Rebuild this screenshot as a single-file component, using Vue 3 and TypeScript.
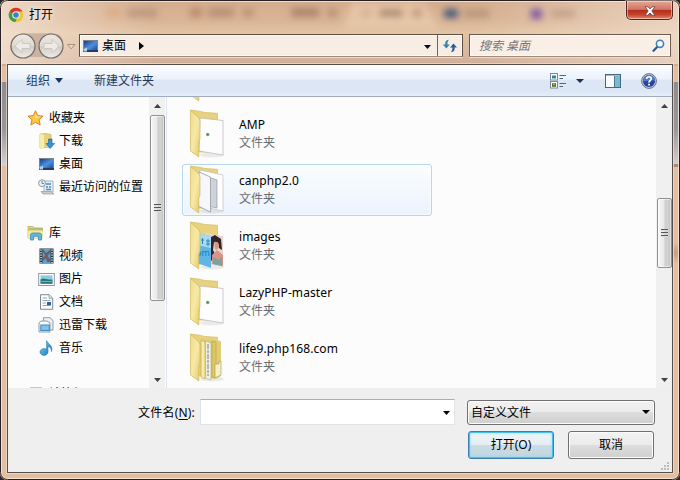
<script setup lang="ts">
type SideIcon = 'star' | 'down' | 'desktop' | 'recent' | 'library' | 'video' | 'picture' | 'doc' | 'thunder' | 'music' | 'computer'
interface SideItem { label: string; icon: SideIcon }
interface SideGroup { head: SideItem; children: SideItem[] }
type FolderKind = 'empty' | 'page' | 'sheets' | 'photos' | 'files'
interface FileItem { name: string; kind: FolderKind; active?: boolean }

const groups: SideGroup[] = [
  {
    head: { label: '收藏夹', icon: 'star' },
    children: [
      { label: '下载', icon: 'down' },
      { label: '桌面', icon: 'desktop' },
      { label: '最近访问的位置', icon: 'recent' },
    ],
  },
  {
    head: { label: '库', icon: 'library' },
    children: [
      { label: '视频', icon: 'video' },
      { label: '图片', icon: 'picture' },
      { label: '文档', icon: 'doc' },
      { label: '迅雷下载', icon: 'thunder' },
      { label: '音乐', icon: 'music' },
    ],
  },
  { head: { label: '计算机', icon: 'computer' }, children: [] },
]

const rows = groups.map((g) => [{ ...g.head, head: true }, ...g.children.map((c) => ({ ...c, head: false }))])

const files: FileItem[] = [
  { name: '', kind: 'empty' },
  { name: 'AMP', kind: 'page' },
  { name: 'canphp2.0', kind: 'sheets', active: true },
  { name: 'images', kind: 'photos' },
  { name: 'LazyPHP-master', kind: 'page' },
  { name: 'life9.php168.com', kind: 'files' },
]
</script>

<template>
  <div class="window">
    <svg class="glass" width="680" height="480" aria-hidden="true">
      <defs>
        <linearGradient id="glassTop" x1="0" y1="0" x2="0" y2="1">
          <stop offset="0" stop-color="#d3ac8d" /><stop offset=".3" stop-color="#d9b496" />
          <stop offset=".5" stop-color="#e2c3a3" /><stop offset=".8" stop-color="#d8b79f" /><stop offset="1" stop-color="#cfae98" />
        </linearGradient>
        <linearGradient id="sideGrey" x1="0" y1="0" x2="0" y2="1">
          <stop offset="0" stop-color="#8d8d92" /><stop offset=".55" stop-color="#96969b" /><stop offset="1" stop-color="#d4d1d2" />
        </linearGradient>
        <linearGradient id="glow" x1="0" x2="1"><stop offset="0" stop-color="#f6e6d8" stop-opacity=".75" /><stop offset="1" stop-color="#f6e6d8" stop-opacity="0" /></linearGradient>
        <linearGradient id="glowRight" x1="0" x2="1"><stop offset="0" stop-color="#f6e6d8" stop-opacity="0" /><stop offset="1" stop-color="#f6e6d8" stop-opacity=".6" /></linearGradient>
        <filter id="soft" x="-50%" y="-50%" width="200%" height="200%"><feGaussianBlur stdDeviation="3.6" /></filter>
      </defs>
      <rect width="680" height="480" fill="#e1bea2" />
      <rect width="680" height="66" fill="url(#glassTop)" />
      <rect width="150" height="64" fill="url(#glow)" />
      <rect x="480" width="200" height="64" fill="url(#glowRight)" />
      <g filter="url(#soft)">
        <path d="M344 28 352 3H424L438 28Z" fill="#edceb0" opacity=".7" />
        <rect x="106" y="9" width="14" height="8" fill="#df9e66" opacity=".5" /><rect x="127" y="9" width="30" height="8" fill="#97745e" opacity=".45" />
        <rect x="190" y="8" width="12" height="9" fill="#b07958" opacity=".7" /><rect x="208" y="8" width="26" height="9" fill="#967158" opacity=".5" />
        <rect x="243" y="9" width="10" height="8" fill="#967158" opacity=".5" /><rect x="291" y="8" width="28" height="9" fill="#91694f" opacity=".6" />
        <rect x="328" y="9" width="9" height="8" fill="#91694f" opacity=".5" /><rect x="361" y="9" width="10" height="8" fill="#b48e70" opacity=".4" />
        <rect x="379" y="9" width="24" height="8" fill="#8e6a52" opacity=".65" /><rect x="412" y="9" width="10" height="8" fill="#9a7052" opacity=".55" />
        <rect x="444" y="9" width="14" height="9" fill="#3c4f78" opacity=".9" /><rect x="464" y="10" width="25" height="7" fill="#91735f" opacity=".5" />
        <rect x="531" y="9" width="11" height="10" fill="#6c45a4" opacity=".85" /><rect x="551" y="10" width="24" height="7" fill="#91735f" opacity=".4" />
      </g>
      <rect x="1" y="82" width="6" height="84" fill="url(#sideGrey)" /><rect x="673" y="82" width="6" height="84" fill="url(#sideGrey)" />
      <rect x="673" y="164" width="6" height="3" fill="#a98b76" /><rect x="673" y="248" width="6" height="10" fill="#a98268" filter="url(#soft)" />
      <rect x="1.5" y="1.5" width="677" height="477" rx="6" fill="none" stroke="#f8ebdd" stroke-opacity=".8" />
      <rect x=".5" y=".5" width="679" height="479" rx="7" fill="none" stroke="#272022" />
    </svg>

    <div class="chrome">
      <header class="titlebar">
        <svg class="logo" width="16" height="16" viewBox="0 0 16 16">
          <circle cx="8" cy="8" r="7.3" fill="#e8c92f" />
          <path d="M8 8 1.6 4.4A7.3 7.3 0 0 1 14.4 4.5H8Z" fill="#d8372a" />
          <path d="M8 8 1.6 4.4A7.3 7.3 0 0 0 7.2 15.3L10 9Z" fill="#41a047" />
          <circle cx="8" cy="8" r="3.8" fill="#f5f0e6" /><circle cx="8" cy="8" r="2.8" fill="#3f7fd0" />
        </svg>
        <h1>打开</h1>
        <button class="close" aria-label="关闭">
          <svg width="12" height="10" viewBox="0 0 12 10"><path d="M1 .8H4L6 2.9 8 .8H11L7.8 4.9 11 9.2H8L6 7 4 9.2H1L4.2 4.9Z" fill="#fff" stroke="#623c3b" stroke-width=".8" /></svg>
        </button>
      </header>

      <div class="navbar">
        <svg class="travel" width="70" height="28" viewBox="0 0 70 28">
          <defs>
            <linearGradient id="orb" x1="0" y1="0" x2="0" y2="1"><stop offset="0" stop-color="#eee8e1" /><stop offset=".48" stop-color="#dedad4" /><stop offset=".5" stop-color="#cfcac5" /><stop offset="1" stop-color="#efebe6" /></linearGradient>
          </defs>
          <path d="M14 1.2H43C50 1 54 4 55 9V19C50 28 44 27 40 25H18C8 28 2 20 2 14Z" fill="#bba28f" opacity=".65" />
          <circle cx="15" cy="14" r="12" fill="url(#orb)" stroke="#756c67" stroke-width="1.2" />
          <circle cx="43" cy="14" r="12" fill="url(#orb)" stroke="#756c67" stroke-width="1.2" />
          <path d="M7 14 14 7.5V11.5H22V16.5H14V20.5Z M51 14 44 7.5V11.5H36V16.5H44V20.5Z" fill="#eeebe7" stroke="#c6c0ba" stroke-width=".8" />
          <path d="M59.5 12.5H67L63.2 16.8Z" fill="#e8d8ca" stroke="#957f70" stroke-width=".8" />
        </svg>
        <div class="address">
          <svg width="17" height="14" viewBox="0 0 17 14"><use href="#i-desktop" /></svg>
          <span class="place">桌面</span>
          <svg class="crumb" width="5" height="8" viewBox="0 0 5 8"><path d="M0 0 5 4 0 8Z" fill="#000" /></svg>
          <svg class="addr-arrow" width="7" height="4" viewBox="0 0 7 4"><path d="M0 0H7L3.5 4Z" fill="#050542" /></svg>
          <span class="refresh">
            <svg width="16" height="14" viewBox="0 0 16 14">
              <path d="M7 .7C3.7 1 3 3 3.2 5.5H.8L4.4 9.4 7.8 5.5H5.5C5.3 3.5 5.6 2.3 7 .7Z" fill="#3287b5" />
              <path d="M8.8 13.3C12.1 13 12.8 11 12.6 8.5H15L11.5 4.6 8 8.5H10.3C10.5 10.5 10.2 11.7 8.8 13.3Z" fill="#275d9b" />
            </svg>
          </span>
        </div>
        <div class="search">
          <span>搜索 桌面</span>
          <svg width="13" height="13" viewBox="0 0 13 13"><path d="M1.5 11.7 5.6 7.5" stroke="#28588f" stroke-width="2.2" stroke-linecap="round" /><circle cx="8" cy="4.8" r="3.6" fill="#f4fafd" stroke="#3c83bc" stroke-width="1.6" /></svg>
        </div>
      </div>

      <main class="client">
        <div class="toolbar">
          <span>组织</span>
          <svg class="org-arrow" width="8" height="5" viewBox="0 0 8 5"><path d="M0 0H8L4 5Z" fill="#1b3458" /></svg>
          <span class="new-folder">新建文件夹</span>
          <svg class="view" width="17" height="16" viewBox="0 0 17 16">
            <rect x=".5" y=".5" width="7" height="6.5" fill="#fff" stroke="#7c8a96" /><rect x="2" y="2.5" width="4" height="3" fill="#2e83ae" />
            <rect x=".5" y="8.5" width="7" height="6.5" fill="#fff" stroke="#7c8a96" /><rect x="2" y="10.2" width="4" height="3.6" fill="#4c722b" /><rect x="3.2" y="10.8" width="1.4" height="1.4" fill="#e2d65c" />
            <path d="M9.5 2.5H16M9.5 5.5H13M9.5 10.5H16M9.5 13.5H13" stroke="#52667d" />
          </svg>
          <svg class="view-arrow" width="8" height="4" viewBox="0 0 8 4"><path d="M0 0H8L4 4Z" fill="#172f50" /></svg>
          <svg class="pane" width="16" height="14" viewBox="0 0 16 14"><rect x=".5" y=".5" width="15" height="13" fill="#fbfdfe" stroke="#466783" /><path d="M1 1.5H15" stroke="#a4bdd0" /><rect x="9.5" y="2" width="5.5" height="11" fill="#78bad0" /><path d="M9.5 2V13" stroke="#527990" /></svg>
          <svg class="help" width="16" height="16" viewBox="0 0 16 16"><circle cx="8" cy="8" r="7.4" fill="#c5cbd6" stroke="#65718c" /><circle cx="8" cy="8" r="6.1" fill="#2346a3" /><path d="M2 8A6 6 0 0 1 14 8C10 6 6 9 2 8Z" fill="#5477c8" /><path d="M5.6 6C5.5 3 10.6 3 10.3 5.9 10.1 7.6 8 7.4 8 9.5" fill="none" stroke="#fff" stroke-width="1.7" /><rect x="7.1" y="10.7" width="1.9" height="1.8" fill="#fff" /></svg>
        </div>

        <div class="body">
          <nav class="side">
            <div v-for="(group, g) in rows" :key="g" class="group">
              <div v-for="row in group" :key="row.label" class="side-row" :class="{ head: row.head }">
                <svg width="17" height="16" viewBox="0 0 17 16"><use :href="'#i-' + row.icon" /></svg>
                <span>{{ row.label }}</span>
              </div>
            </div>
          </nav>
          <div class="scroll side-scroll">
            <svg width="7" height="4" viewBox="0 0 7 4"><path d="M3.5 0 7 4H0Z" fill="#404040" /></svg>
            <div class="thumb"><i /><i /><i /></div>
            <svg width="7" height="4" viewBox="0 0 7 4"><path d="M0 0H7L3.5 4Z" fill="#404040" /></svg>
          </div>

          <section class="files">
            <article v-for="(file, n) in files" :key="n" class="file" :class="{ active: file.active }">
              <svg width="42" height="50" viewBox="0 0 42 50">
                <path d="M6 1 14 2.2 20 3.5 32.5 4.3V43L10 43Z" fill="#e8d27d" stroke="#d5bc64" stroke-width=".7" />
                <ellipse v-if="file.kind !== 'empty'" cx="27" cy="46" rx="12" ry="2.5" fill="#999" opacity=".18" />
                <g v-if="file.kind === 'page'">
                  <path d="M15 9 38 11.5V46L14 42Z" fill="#fdfdfd" stroke="#b4b4b4" stroke-width=".7" />
                  <circle cx="22.7" cy="25.5" r="1.8" fill="#7db573" /><circle cx="22.7" cy="25.5" r=".9" fill="#4c8d4c" />
                </g>
                <g v-else-if="file.kind === 'sheets'">
                  <path d="M15 5 38 10V46L15 41Z" fill="#fff" stroke="#bdbdc2" stroke-width=".7" />
                  <path d="M17 10 32 15V43L17 40Z" fill="#cdd2dc" stroke="#979ba4" stroke-width=".7" />
                  <path d="M14 7 25.5 12V47L13 41Z" fill="#f6f7fa" stroke="#9899a0" stroke-width=".8" />
                </g>
                <g v-else-if="file.kind === 'photos'">
                  <path d="M20 12 38 15V46L20 42Z" fill="#e7d6ca" />
                  <path d="M24 17 30 14 36 18 37 29 34 27 33 23 29 21 28 29 31 35 24 42Z" fill="#30252c" />
                  <path d="M29 21Q34 20 34 25 33 30 30 28Z" fill="#d89b82" /><path d="M27 34 32 29 38 34V45L27 43Z" fill="#da9289" />
                  <path d="M28 36 33 39 37 36V45L28 43Z" fill="#74a59f" />
                  <path d="M12 12 26 15V47L12 42Z" fill="#5fb6e4" /><path d="M12 12 26 15V27L12 24Z" fill="#a8d9ef" />
                  <path d="M16 19H19M17.5 17V23M21 20H25M23 18V25M21 23H25" stroke="#2589bf" />
                  <text class="cover-text" x="11" y="35">om</text>
                </g>
                <g v-else-if="file.kind === 'files'">
                  <path d="M16 5 36 8V43L31 46 16 43Z" fill="#e0cd79" /><path d="M16 7 20 9V46L16 44Z" fill="#f7ebac" stroke="#b8a348" stroke-width=".6" />
                  <path d="M20.5 8 26 10V47L20.5 45Z" fill="#f1efe2" stroke="#b6ad7c" stroke-width=".6" /><path d="M23 11V43" stroke="#a5aaa9" stroke-width="1.6" stroke-dasharray="5 1 3 1" />
                  <path d="M27 8 31 9V44L27 45Z" fill="#ddc85f" stroke="#b8a348" stroke-width=".6" /><path d="M30 31H34V28H36V42L30 45Z" fill="#f4efd0" stroke="#b9a244" stroke-width=".7" />
                </g>
                <path d="M5.5 1.2 14 9Q15.5 11 15 16V30L13.8 33V48L5.5 42Z" fill="url(#flap)" stroke="#d1b95f" stroke-width=".7" />
              </svg>
              <div class="meta"><strong>{{ file.name }}</strong><small v-if="file.name">文件夹</small></div>
            </article>
          </section>
          <div class="scroll file-scroll">
            <svg width="7" height="4" viewBox="0 0 7 4"><path d="M3.5 0 7 4H0Z" fill="#404040" /></svg>
            <div class="thumb"><i /><i /><i /></div>
            <svg width="7" height="4" viewBox="0 0 7 4"><path d="M0 0H7L3.5 4Z" fill="#404040" /></svg>
          </div>
        </div>

        <footer class="footer">
          <div class="line">
            <label>文件名(<u>N</u>):</label>
            <div class="name-input"><svg width="7" height="4" viewBox="0 0 7 4"><path d="M0 0H7L3.5 4Z" fill="#000" /></svg></div>
            <div class="type-select"><span>自定义文件</span><svg width="8" height="4" viewBox="0 0 8 4"><path d="M0 0H8L4 4Z" fill="#000" /></svg></div>
          </div>
          <div class="actions">
            <button class="btn primary">打开(O)</button>
            <button class="btn">取消</button>
          </div>
          <svg class="grip" width="9" height="9" viewBox="0 0 9 9"><path d="M6 0H8V2H6ZM3 3H5V5H3ZM6 3H8V5H6ZM0 6H2V8H0ZM3 6H5V8H3ZM6 6H8V8H6Z" fill="#bcbcbc" /></svg>
        </footer>
      </main>
    </div>

    <svg class="defs" width="0" height="0">
      <defs>
        <linearGradient id="flap" x1="0" y1="0" x2="1" y2="1"><stop offset="0" stop-color="#efdc8c" /><stop offset=".5" stop-color="#f7e9a6" /><stop offset="1" stop-color="#e3c766" /></linearGradient>
        <linearGradient id="blue" x1="0" y1="0" x2="1" y2="1"><stop offset="0" stop-color="#173e8e" /><stop offset=".55" stop-color="#4f90dc" /><stop offset="1" stop-color="#1b4da5" /></linearGradient>
        <linearGradient id="cyan" x1="0" y1="0" x2="1" y2="1"><stop offset="0" stop-color="#85d1f1" /><stop offset="1" stop-color="#1675b6" /></linearGradient>
      </defs>
      <symbol id="i-star" viewBox="0 0 17 16"><path d="M8.5 .8 10.7 5.6 16 6.2 12 9.7 13.2 15 8.5 12.3 3.8 15 5 9.7 1 6.2 6.3 5.6Z" fill="#ffc845" stroke="#da812d" /><path d="M8.5 2.5 10 6.5 14 7 8.5 8Z" fill="#ffeaa0" /></symbol>
      <symbol id="i-down" viewBox="0 0 17 16"><path d="M2 1 8 .5 13 1.5V14L2 15Z" fill="#ead27c" stroke="#c9b25d" stroke-width=".7" /><path d="M2 1 6 2V15.5L2 14.5Z" fill="#f8edab" /><path d="M10.5 6H14V10.5H16.5L12.2 15.5 8 10.5H10.5Z" fill="#3693d7" stroke="#1d6dab" stroke-width=".7" /></symbol>
      <symbol id="i-desktop" viewBox="0 0 17 14"><rect x="1" y="1" width="15" height="12" fill="#788492" /><rect x="2" y="2" width="13" height="9" fill="url(#blue)" /><rect x="1" y="11" width="15" height="2" fill="#293c60" /><path d="M1.5 10 5 8.5V12.5H1.5Z" fill="#9fd4ed" /></symbol>
      <symbol id="i-recent" viewBox="0 0 17 16"><path d="M6 2H15V13H6Z" fill="#e7eff6" stroke="#8fa0af" stroke-width=".8" /><path d="M3 12.5H13L16 15H5Z" fill="#c8ccd0" stroke="#969ba1" stroke-width=".7" /><path d="M8 5H13M8 8H10M11 8H13M8 10.5H13" stroke="#478ac2" stroke-width="1.3" /><circle cx="4" cy="4.2" r="3.4" fill="#eef1f2" stroke="#8d989e" /><path d="M4 2V4.5H6" fill="none" stroke="#596c78" stroke-width=".8" /></symbol>
      <symbol id="i-library" viewBox="0 0 17 16"><path d="M1 4V1.5H6L7.5 3H15.5V13H1Z" fill="#e7d784" stroke="#b4a354" stroke-width=".7" /><path d="M2 4H15" stroke="#79b175" stroke-width="1.2" /><path d="M1 6H16V13H1Z" fill="#f4e7a2" /><path d="M3.5 15V10Q3.5 8 6 8H12Q14.5 8 14.5 10V15H11.5V11.2H6.5V15Z" fill="#65b7df" stroke="#358bb7" stroke-width=".8" /></symbol>
      <symbol id="i-video" viewBox="0 0 17 16"><rect x="1.5" y=".5" width="14" height="15" fill="#26343e" /><rect x="4.5" y="1" width="8" height="14" fill="#5ba2d6" /><path d="M5 1 8 5 12 2V5L9.5 8 12 11V14H9L8 10 5 13V10L7 7 5 4Z" fill="#765a58" /><path d="M3 1.5V15M14 1.5V15" stroke="#edf1f2" stroke-width="1.4" stroke-dasharray="1.3 1.2" /></symbol>
      <symbol id="i-picture" viewBox="0 0 17 16"><rect x=".7" y="2.5" width="15.6" height="12" fill="#fff" stroke="#8c98a2" /><rect x="2.5" y="4.3" width="12" height="8.4" fill="#8bcce0" /><path d="M2.5 8.5C6 6 8 9 14.5 8.5V12.7H2.5Z" fill="#277879" /><path d="M3 10.5H14" stroke="#62bbae" /></symbol>
      <symbol id="i-doc" viewBox="0 0 17 16"><path d="M2.5 .7H11L14.7 4V15.3H2.5Z" fill="#fbfcfd" stroke="#7f8990" /><path d="M11 1V4.2H14.5" fill="#e0e5e9" stroke="#7f8990" stroke-width=".7" /><path d="M4.5 4H9M4.5 6.5H12.5M4.5 9H8M4.5 11.5H12.5" stroke="#99abb8" /><rect x="9" y="8" width="4" height="3.2" fill="#315f8c" /></symbol>
      <symbol id="i-thunder" viewBox="0 0 17 16"><path d="M5.5 .7H12L15 3.5V13H5.5Z" fill="#eaf0f5" stroke="#8e9ca8" /><path d="M3 4H9L12 6V15H1V6Z" fill="#f6fafc" stroke="#8e9ca8" /><rect x="2.8" y="8" width="8.5" height="5.5" fill="#80c3eb" stroke="#4388b8" /></symbol>
      <symbol id="i-music" viewBox="0 0 17 16"><path d="M8.6 .6C9.5 4 15.6 5.2 13.4 11.6 13.6 8.2 12 7 10 6.4V12.2A4 3.4 0 1 1 8.6 9.4Z" fill="url(#cyan)" stroke="#2677ac" stroke-width=".6" /></symbol>
      <symbol id="i-computer" viewBox="0 0 17 16"><rect x="3" y="1.5" width="12" height="11" fill="#8c9198" /></symbol>
    </svg>
  </div>
</template>

<style>
body { margin: 0; overflow: hidden; background: #27282b; }
</style>

<style scoped>
* { box-sizing: border-box; }
.window { position: relative; width: 680px; height: 480px; overflow: hidden; border-radius: 7px; font: 12px/16px "Noto Sans", "Noto Sans CJK SC", sans-serif; color: #000; }
.glass { position: absolute; inset: 0; display: block; }
.defs { position: absolute; }
svg { display: block; flex: none; }
.chrome { position: relative; display: flex; flex-direction: column; height: 480px; padding: 0 7px; }
.titlebar { height: 34px; display: flex; align-items: flex-start; padding: 0 1px; }
.logo { margin: 7px 0 0; }
h1 { margin: 7px 0 0 5px; font: inherit; flex: 1; text-shadow: 0 0 6px #fff, 0 0 8px #fff8; }
.close { margin: 1px -1px 0 0; width: 47px; height: 19px; padding: 3px 0 0 1px; border: 1px solid #57231f; border-top: 0; border-radius: 0 0 5px 5px; background: linear-gradient(#e6a696 0, #cf7465 47%, #b52c1b 50%, #c4432a 75%, #df8868 100%); box-shadow: inset 0 0 0 1px #ffffff70, 0 0 0 1px #f6dece70; display: flex; justify-content: center; align-items: center; }
.close svg { margin-top: -2px; }
.navbar { display: flex; height: 30px; align-items: flex-start; }
.travel { margin: -2px 0 0 1px; }
.address { display: flex; align-items: center; width: 384px; height: 23px; margin-left: 1px; border: 1px solid #5f4e43; border-bottom-color: #a28a7a; background: #f7ede3; padding-left: 2px; box-shadow: inset 0 0 0 1px #fffaf4, 0 1px #efd9c8; }
.place { margin-left: 3px; }
.crumb { margin-left: 13px; }
.addr-arrow { margin-left: auto; margin-right: 6px; margin-top: 2px; }
.refresh { width: 25px; height: 21px; border-left: 1px solid #71635a; display: flex; align-items: center; justify-content: center; }
.search { display: flex; align-items: center; justify-content: space-between; margin-left: 6px; width: 202px; height: 23px; border: 1px solid #6c5a4e; border-bottom-color: #a28a7a; background: #f9efe7; padding: 0 5px 0 9px; color: #777574; font-style: italic; box-shadow: inset 0 0 0 1px #fffaf4, 0 1px #efd9c8; }
.search span { padding-top: 1px; }
.search svg { margin-top: -1px; }
.client { width: 666px; height: 409px; border: 1px solid #584f4a; background: #efefef; box-shadow: 0 0 0 1px #f5e3d3a0; display: flex; flex-direction: column; }
.toolbar { height: 32px; display: flex; align-items: center; padding: 0 15px 0 18px; color: #1e395b; background: linear-gradient(#fcfeff 0, #eaf2fb 45%, #dce6f4 49%, #dce7f5 84%, #e2effa 100%); border-bottom: 1px solid #9fadbd; }
.org-arrow { margin-left: 5px; }
.new-folder { margin-left: 31px; }
.view { margin-left: auto; }
.view-arrow { margin-left: 9px; }
.pane { margin-left: 21px; }
.help { margin-left: 20px; }
.body { height: 291px; display: flex; background: #fcfcfc; overflow: hidden; }
.side { width: 141px; height: 291px; overflow: hidden; padding-top: 9px; }
.group + .group { margin-top: 23px; }
.side-row { height: 23px; display: flex; align-items: center; gap: 4px; padding-left: 30px; white-space: nowrap; }
.side-row.head { padding-left: 19px; }
.side-row.head span { margin-left: 1px; }
.side-row span { padding-top: 1px; }
.scroll { height: 291px; display: flex; flex-direction: column; align-items: center; background: #f0f0f0; padding: 7px 0 6px; flex: none; }
.side-scroll { width: 16px; }
.file-scroll { width: 16px; }
.scroll > svg:last-child { margin-top: auto; }
.thumb { width: 15px; border: 1px solid #929292; border-radius: 2px; background: linear-gradient(90deg, #f7f7f7 0, #e8e8e8 45%, #cdcdcd 55%, #d3d3d3 75%, #bdbdbd 100%); box-shadow: inset 0 0 0 1px #ffffff80; display: flex; flex-direction: column; align-items: center; justify-content: center; gap: 1px; }
.thumb i { width: 7px; height: 2px; background: linear-gradient(#555 50%, #ddd 50%); }
.side-scroll .thumb { height: 186px; margin-top: 7px; }
.file-scroll .thumb { height: 70px; margin-top: 90px; }
.files { flex: 1; height: 291px; margin-left: 1px; border-left: 1px solid #dfe5ef; padding: 0 0 4px 15px; display: flex; flex-direction: column; justify-content: flex-end; gap: 4px; overflow: hidden; }
.file { width: 250px; height: 52px; flex: none; border: 1px solid transparent; border-radius: 3px; padding-left: 2px; display: flex; align-items: center; }
.file.active { border-color: #b8d6e9; background: linear-gradient(#fbfdfe, #ebf3fd); box-shadow: inset 0 0 0 1px #ffffffa0; }
.meta { margin-left: 12px; display: flex; flex-direction: column; }
.meta strong { font-weight: 400; line-height: 18px; min-height: 18px; letter-spacing: .1px; }
.meta small { font-size: 12px; line-height: 18px; color: #6d6d6d; }
.cover-text { font: 9px "Open Sans", sans-serif; fill: #087ebd; }
.footer { position: relative; flex: 1; padding-top: 11px; }
.line { display: flex; align-items: center; height: 26px; }
label { width: 187px; text-align: right; margin-right: 5px; letter-spacing: .2px; padding-top: 1px; }
u { text-underline-offset: 2px; }
.name-input { width: 255px; height: 26px; background: #fff; border: 1px solid #e2e3e7; border-top-color: #abadb3; display: flex; justify-content: flex-end; align-items: center; padding: 2px 4px 0 0; }
.type-select { width: 188px; height: 25px; margin-left: 12px; border: 1px solid #707070; border-radius: 3px; background: linear-gradient(#f2f2f2 0, #ebebeb 49%, #dddddd 50%, #cfcfcf 100%); box-shadow: inset 0 0 0 1px #fcfcfc; display: flex; align-items: center; justify-content: space-between; padding: 0 4px 0 3px; }
.type-select span { padding-top: 1px; }
.actions { display: flex; gap: 14px; padding: 6px 0 0 460px; }
.btn { width: 86px; height: 28px; border: 1px solid #707070; border-radius: 3px; padding: 0; font: inherit; color: #000; background: linear-gradient(#f2f2f2 0, #ebebeb 49%, #dddddd 50%, #cfcfcf 100%); box-shadow: inset 0 0 0 1px #fcfcfc; }
.btn.primary { border-color: #3c7fb1; box-shadow: inset 0 0 0 1px #48bfe9, inset 0 0 3px 1px #8fdaf4; background: linear-gradient(#f0f5f7 0, #e4eef2 49%, #cbdde5 50%, #bfd5df 100%); }
.grip { position: absolute; right: 2px; bottom: 1px; }
</style>
